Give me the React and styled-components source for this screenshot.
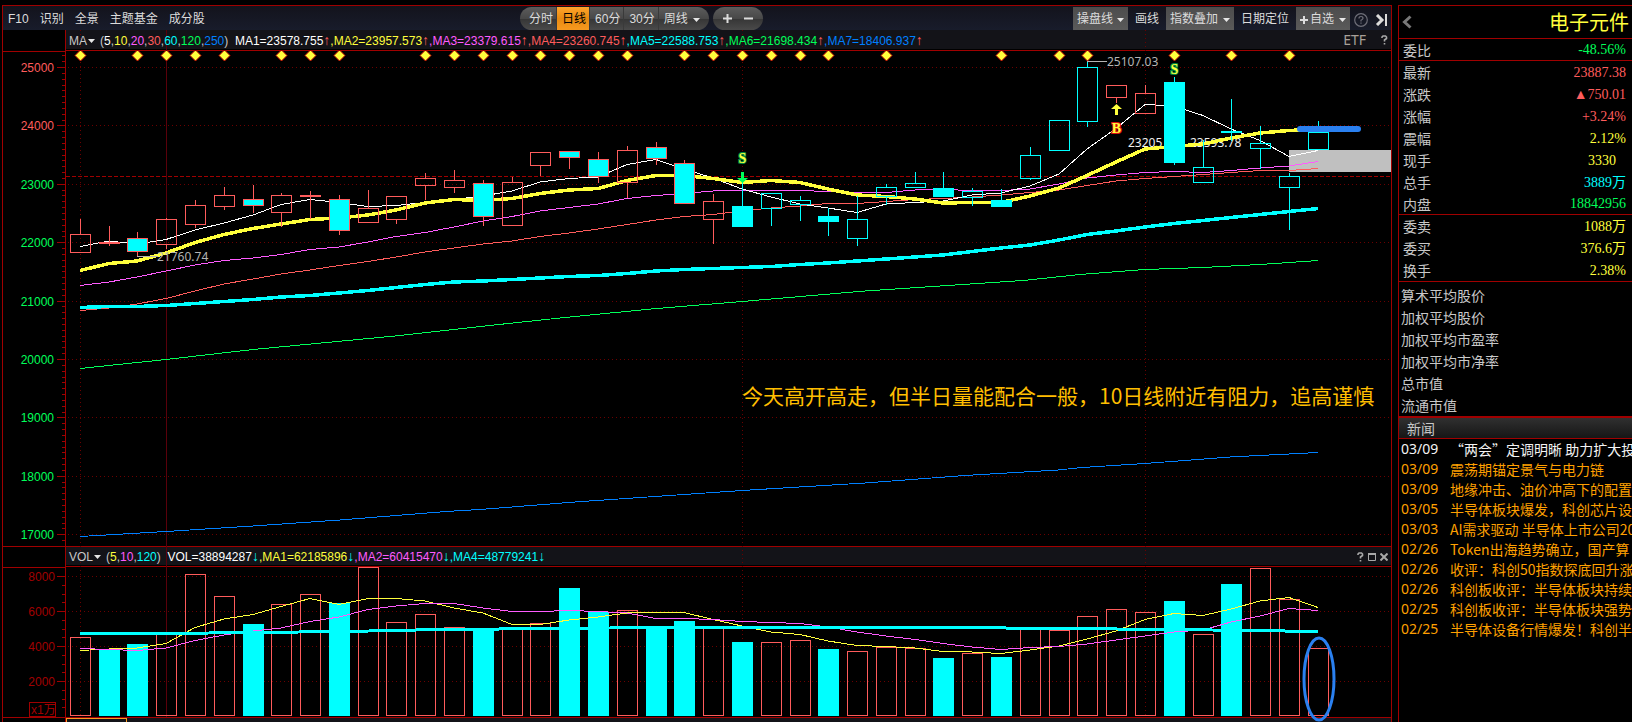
import React from 'react'
import styled, { createGlobalStyle } from 'styled-components'

const GlobalStyle = createGlobalStyle`
    * {
        box-sizing: border-box;
    }
    body {
        margin: 0;
        background: #000;
        color: #c8c8c8;
        font-family: "Liberation Sans", "Noto Sans CJK SC", sans-serif;
        font-size: 12px;
        overflow: hidden;
    }
    button {
        margin: 0;
        padding: 0;
        border: 0;
        background: none;
        color: inherit;
        font: inherit;
        cursor: pointer;
    }
    a {
        color: inherit;
        text-decoration: none;
    }
    svg {
        display: block;
    }
`

const RED = '#ff5c5c'
const LINE = '#a00000'
const CYAN = '#00ffff'
const YELLOW = '#ffff3c'
const GREEN = '#00ff5a'
const BLUE = '#0080ff'
const PINK = '#ff5cff'

const Page = styled.main`
    display: flex;
    gap: 6px;
    min-height: 100vh;
    padding: 5px 0 0 2px;
`

const ChartPane = styled.section`
    flex: 1;
    min-width: 0;
    display: flex;
    flex-direction: column;
    border: 1px solid ${LINE};
    border-bottom: 0;
`

const Toolbar = styled.header`
    display: flex;
    align-items: center;
    height: 24px;
    padding: 1px 2px 0 0;
    background: linear-gradient(#13131c, #181c2b);
    color: #dcdcdc;
    line-height: 21px;
    white-space: nowrap;
`

const Menu = styled.nav`
    display: flex;
    gap: 11px;
    flex: 0 1 517px;
    padding: 2px 0 0 5px;
`

const Pill = styled.div`
    display: flex;
    height: 23px;
    margin-right: 4px;
    border-radius: 12px;
    overflow: hidden;
    background: linear-gradient(#5c5c5c, #484848 50%, #363636 52%, #4a4a4a);
`

const Period = styled.button`
    display: flex;
    align-items: center;
    justify-content: center;
    gap: 5px;
    padding-top: 2px;
    padding-left: ${p => (p.$edge ? 9 : 5)}px;
    padding-right: ${p => (p.$last ? 8 : 3)}px;
    border-right: 1px solid ${p => (p.$last ? 'transparent' : '#3a3a3a')};
    background: ${p => (p.$active ? 'linear-gradient(#ffa52c, #e88a10 50%, #f79a20)' : 'none')};
    color: ${p => (p.$active ? '#000' : '#dcdcdc')};
`

const ZoomButton = styled.button`
    width: 21px;
    display: grid;
    place-items: center;

    &:first-child {
        margin-left: 4px;
    }
    &:last-child {
        margin-right: 4px;
    }
`

const Tools = styled.div`
    display: flex;
    align-items: center;
    gap: 7px;
    margin-left: auto;
`

const Tool = styled.button`
    display: flex;
    align-items: center;
    gap: ${p => (p.$wide ? 5 : 4)}px;
    height: 23px;
    padding: 2px ${p => (p.$boxed ? 4 : 0)}px 0;
    margin-left: ${p => (p.$tight ? -3 : 0)}px;
    background: ${p => (p.$boxed ? 'linear-gradient(#4c4c4c, #5a5a5a)' : 'none')};
`

const AddLabel = styled.span`
    display: flex;
    align-items: center;
    gap: 2px;
`

const Stack = styled.div`
    position: relative;
`

const Guides = styled.svg`
    position: absolute;
    inset: 0;
    z-index: ${p => (p.$top ? 2 : 0)};
    width: 100%;
    height: 100%;
    pointer-events: none;
`

const Legend = styled.div`
    display: grid;
    grid-template-columns: 63px 1fr;
    height: 21px;
    border-top: ${p => (p.$ruled ? `1px solid ${LINE}` : '0')};
`

const LegendGutter = styled.div`
    border-right: 1px solid ${LINE};
`

const LegendBar = styled.div`
    display: flex;
    align-items: center;
    padding: 0 7px 0 3px;
    background: #131318;
    border-bottom: 1px solid ${LINE};
    box-shadow: inset 0 -1px #000;
    line-height: 18px;
    white-space: nowrap;
`

const LegendText = styled.div`
    position: relative;
    z-index: 1;
    display: flex;
    align-items: center;
    padding-top: ${p => (p.$low ? 2 : 0)}px;
    white-space: pre;
`

const Tone = styled.span`
    color: ${p => p.$color};
`

const Arrow = styled(Tone)`
    font-size: 14px;
    line-height: 1;
`

const LegendName = styled.button`
    display: flex;
    align-items: center;
    gap: 1px;
    margin-right: 5px;
`

const LegendTools = styled.div`
    display: flex;
    align-items: center;
    gap: ${p => p.$gap}px;
    margin-left: auto;
    margin-right: -4px;
    color: #a8a8a8;
`

const EtfLink = styled.a`
    color: #a8a098;
    font-size: 14px;
    font-family: "Noto Sans", sans-serif;
`

const Plot = styled.svg`
    position: relative;
    z-index: 1;
    width: 100%;
    height: auto;
    font-family: "Liberation Sans", "Noto Sans CJK SC", sans-serif;
    font-size: 12px;
`

const BottomStrip = styled.footer`
    flex: 1;
    max-height: 24px;
    padding-left: 63px;
    border-top: 1px solid ${LINE};
    background: linear-gradient(90deg, #000 62px, ${LINE} 62px 63px, #131318 63px);
`

const BottomTab = styled.button`
    display: block;
    width: 61px;
    height: 24px;
    border: 1px solid #f79a20;
`

const SidePane = styled.aside`
    flex: 0 0 234px;
    min-width: 0;
    overflow: hidden;
    border: 1px solid ${LINE};
    border-width: 1px 0 0 1px;
    font-family: "Noto Sans CJK SC", sans-serif;
    font-size: 14px;
`

const SideHeader = styled.header`
    display: flex;
    align-items: center;
    justify-content: space-between;
    height: 33px;
    padding: 0 3px;
    border-bottom: 1px solid ${LINE};
`

const SideTitle = styled.h1`
    margin: 0;
    color: ${YELLOW};
    font-size: 20px;
    font-weight: 400;
    line-height: 30px;
`

const Quotes = styled.table`
    width: 100%;
    border-collapse: collapse;
    border-bottom: 1px solid ${LINE};

    th, td {
        height: 22px;
        padding: 1px 0 0;
        line-height: 21px;
        vertical-align: top;
    }
    th {
        padding-left: 4px;
        text-align: left;
        font-weight: 400;
    }
    &:not(:last-of-type) tr:last-child > * {
        height: 21px;
        line-height: 20px;
    }
`

const QuoteValue = styled.td`
    && {
        padding-right: ${p => (p.$inset ? 16 : 6)}px;
    }
    color: ${p => p.$color};
    font-family: "Liberation Serif", "Noto Sans CJK SC", serif;
    text-align: right;
`

const Averages = styled.ul`
    margin: 0;
    padding: 2px 0 0 2px;
    list-style: none;
    line-height: 22px;
    border-bottom: 2px solid ${LINE};
`

const NewsHeader = styled.h2`
    margin: 0;
    height: 21px;
    padding-left: 8px;
    border-bottom: 1px solid ${LINE};
    background: linear-gradient(#303030, #161616);
    font-size: 14px;
    font-weight: 400;
    line-height: 20px;
`

const NewsList = styled.ul`
    margin: 0;
    padding: 0 0 0 2px;
    list-style: none;
    line-height: 20px;
`

const NewsItem = styled.li`
    display: grid;
    grid-template-columns: 49px 1fr;
    color: ${p => (p.$fresh ? '#f4f4f4' : '#ffa000')};
    white-space: nowrap;

    time {
        font-family: "Noto Sans", sans-serif;
    }
`

const Caret = () => (
    <svg width="7" height="4" viewBox="0 0 7 4" aria-hidden="true">
        <path d="M0 0h7L3.5 4z" fill="#e6e6e6" />
    </svg>
)

const HelpMark = () => (
    <svg width="7" height="10" viewBox="0 0 7 10" aria-hidden="true">
        <path d="M1 3V2l1-1h2.500l1 1v1.500L3.500 5v1.500M3.500 8v1.500" fill="none" stroke="#a8a8a8" strokeWidth="1.600" />
    </svg>
)

// candle: [kind, high, top, bottom, low]
// r = hollow red, f = filled with red edge, h = hollow cyan, c = filled cyan
const CANDLES = [
    ['r', 219, 234, 253, 253], ['r', 226, 242, 244, 246], ['f', 232, 238, 252, 256], ['r', 218, 219, 245, 249],
    ['r', 200, 205, 225, 228], ['r', 187, 195, 207, 210], ['f', 185, 199, 206, 213], ['r', 193, 195, 213, 227],
    ['r', 191, 195, 197, 219], ['f', 195, 199, 231, 235], ['r', 190, 208, 223, 223], ['r', 196, 196, 220, 224],
    ['r', 173, 178, 186, 200], ['r', 170, 180, 188, 193], ['f', 180, 183, 217, 226], ['r', 177, 182, 226, 226],
    ['r', 152, 152, 166, 176], ['f', 151, 151, 158, 169], ['f', 152, 159, 177, 183], ['r', 146, 150, 183, 198],
    ['f', 142, 147, 159, 165], ['f', 160, 163, 204, 204], ['r', 194, 201, 220, 244], ['c', 182, 206, 227, 227],
    ['h', 193, 193, 209, 226], ['h', 196, 200, 205, 221], ['c', 208, 216, 222, 236], ['h', 196, 219, 239, 246],
    ['h', 184, 187, 197, 205], ['h', 172, 183, 188, 188], ['c', 172, 188, 197, 197], ['h', 188, 191, 198, 206],
    ['c', 189, 200, 207, 207], ['h', 147, 155, 179, 180], ['h', 120, 120, 151, 151], ['h', 60, 67, 122, 127],
    ['r', 85, 85, 98, 103], ['r', 85, 93, 114, 114], ['c', 77, 82, 163, 165], ['h', 140, 167, 183, 183],
    ['h', 99, 131, 133, 141], ['h', 126, 143, 149, 169], ['h', 173, 176, 188, 230], ['h', 121, 132, 150, 150],
]

// volume bar: [filled, top]
const VOLUMES = [
    [0, 637], [1, 649], [1, 644], [0, 634], [0, 574], [0, 596], [1, 624], [0, 604], [0, 594], [1, 603], [0, 567],
    [0, 622], [0, 614], [0, 627], [1, 628], [0, 627], [0, 623], [1, 588], [1, 612], [0, 610], [1, 627], [1, 621],
    [0, 628], [1, 642], [0, 642], [0, 640], [1, 649], [0, 651], [0, 647], [0, 648], [1, 658], [0, 653], [1, 657],
    [0, 629], [0, 630], [0, 616], [0, 609], [0, 612], [1, 601], [0, 634], [1, 584], [0, 568], [0, 599], [0, 648],
]

const EVENT_DAYS = [0, 2, 3, 4, 5, 7, 8, 9, 12, 13, 14, 15, 16, 17, 18, 19, 21, 22, 23, 24, 25, 26, 28, 32, 34, 35, 38, 40, 42]

const barX = i => Math.floor(80.3 + i * 28.79)
const byBar = values => values.map((y, i) => `${barX(i)},${y}`).join(' ')

const PRICE_LINES = [
    { color: BLUE, points: '80,536.5 166,531.5 253,526 340,520 446,511.5 480,509.5 575,502 742,490.5 865,483 965,475.5 1058,470 1082,467.5 1145,463.5 1230,457 1318,452.5' },
    { color: GREEN, points: '80,368.5 166,359.5 253,349.5 400,335.5 454,329.5 480,326.5 560,318 651,309 742,301.5 865,291 1023,280.500 1080,274.5 1145,269.5 1203,267.5 1260,264.5 1318,260.5' },
    { color: RED, points: byBar([310.5, 308, 304, 298.5, 291, 284, 279, 274, 270, 265.5, 261.5, 257, 252, 248, 244, 241, 236.5, 233, 229, 224.5, 220, 216.5, 214.5, 211, 208, 206, 203.5, 203.5, 201.5, 199.5, 198.5, 197, 195, 192.5, 190, 185.5, 181, 178.5, 176.5, 174.5, 172.5, 170.5, 170.5, 168.5]) },
    { color: PINK, points: byBar([285.5, 282, 277, 271, 265, 260.5, 258, 254.5, 249.5, 247, 242, 236.5, 232.5, 227, 221, 216.5, 211, 207.5, 204, 198.5, 195.5, 193.5, 191, 190.5, 190.5, 190.5, 191.5, 192.5, 192.5, 190, 189.5, 190.5, 190.5, 189, 184, 178, 175, 172.5, 171.5, 172.5, 170.5, 168, 166, 161.5]) },
    { color: '#ffffff', points: byBar([246.5, 241, 244, 239.5, 230, 223, 215, 204.5, 199.5, 202.5, 206.5, 205.5, 202.5, 199.5, 196, 191, 182, 178.5, 177, 164.5, 159.5, 169, 178, 189, 197, 204, 208, 212.5, 204, 202.5, 201, 195, 193, 186, 174, 149, 128.5, 104.5, 106, 115.5, 129, 140.5, 156.5, 150.5]) },
    { color: YELLOW, width: 3.5, points: byBar([270.5, 263.5, 261, 253, 242.5, 234.5, 228.5, 224, 219.5, 218, 215, 210, 203, 199.5, 200.5, 198.5, 193.5, 190, 188.5, 180.5, 175.5, 175.5, 178.5, 182.5, 180.5, 182.5, 189, 195, 196.5, 199, 203, 202.5, 202.5, 196, 188, 175.5, 162, 149, 146.5, 144, 138, 133, 130.5, 129]) },
    { color: CYAN, width: 3.5, points: byBar([307.5, 306.5, 306.5, 305.5, 303.5, 301.5, 299.5, 297, 295.5, 293, 290.5, 287.5, 284.5, 282, 281, 279.5, 278, 276.5, 275.5, 273.5, 271, 269.5, 268.5, 267.5, 266.5, 264.5, 263, 261, 259, 257, 255, 251.5, 248, 245, 240, 234.5, 231, 227, 223.5, 220.5, 217.5, 214.5, 211.5, 208.5]) },
]

const VOLUME_LINES = [
    { color: YELLOW, points: byBar([650.5, 649, 648, 643.5, 627.5, 619, 614.5, 606.5, 598.5, 604.5, 598.5, 598.5, 601, 608, 613, 624.5, 624.5, 620, 617, 613, 612.5, 612.5, 619.5, 626, 632, 634.5, 641, 645.5, 646.5, 648, 651.5, 652, 653.5, 650, 646, 639, 631, 619.5, 613.5, 615.5, 609, 601, 597.5, 607.5]) },
    { color: PINK, points: byBar([648.5, 649.5, 650.5, 648, 640.5, 635, 631, 628, 621.5, 617, 609.5, 606, 603.5, 603.5, 608, 611.5, 611.5, 610.5, 611.5, 613, 618.5, 618.5, 619.5, 621.5, 622.5, 623.5, 627, 632, 636, 639.5, 643.5, 647, 649.5, 647.5, 646.5, 644, 640, 636, 632, 630, 622, 616, 608.5, 610.5]) },
    { color: CYAN, width: 3, points: '80,633.5 165,633.5 253,632.5 345,631.5 440,629.5 560,628.5 660,627.5 950,627.5 1059,628.500 1174,629.5 1250,630.5 1318,631.5' },
]

const PRICE_TICKS = [25000, 24000, 23000, 22000, 21000, 20000, 19000, 18000, 17000]
const priceY = v => Math.round(67 + (25000 - v) * 0.0584) + 0.5
const volumeY = v => Math.round(576 + (8000 - v) * 0.0175) + 0.5

const range = (from, to, step) => {
    const out = []
    for (let v = from; v <= to; v += step) out.push(v)
    return out
}

const Curves = ({ lines }) => lines.map((l, i) => (
    <polyline key={i} points={l.points} fill="none" stroke={l.color} strokeWidth={l.width || 1} shapeRendering="crispEdges" />
))

const Candle = ({ index, data }) => {
    const [kind, high, top, bottom, low] = data
    const x = barX(index)
    const stroke = kind === 'r' || kind === 'f' ? RED : CYAN
    const fill = kind === 'f' || kind === 'c' ? CYAN : 'none'
    return (
        <g stroke={stroke} shapeRendering="crispEdges">
            <path d={`M${x + 0.5} ${high}V${top}M${x + 0.5} ${bottom}V${low}`} />
            <rect x={x - 9.5} y={top + 0.5} width="20" height={bottom - top - 1} fill={fill} />
        </g>
    )
}

const Signal = ({ x, y, children, outline }) => (
    <text x={x} y={y} textAnchor="middle" fontFamily="Liberation Serif, serif" fontWeight="700" fontSize="14"
        fill={YELLOW} stroke={outline} strokeWidth="2" paintOrder="stroke">{children}</text>
)

const PriceChart = () => (
    <Plot viewBox="3 51 1388 495" role="img" aria-label="日线 K线图">
        <g stroke={LINE} shapeRendering="crispEdges">
            <path d="M3 51.500H65M65.500 51V546" />
            {range(16900, 25200, 100).map(v => (
                <path key={v} d={`M${v % 1000 ? 62 : 57} ${priceY(v)}H65`} />
            ))}
        </g>
        {PRICE_TICKS.map(v => (
            <g key={v}>
                <path d={`M68 ${priceY(v)}H1391`} stroke="#6a0000" strokeDasharray="1 3" shapeRendering="crispEdges" />
                <text x="54" y={priceY(v) + 4.5} textAnchor="end" fill={v > 23000 ? RED : GREEN}>{v}</text>
            </g>
        ))}
        <path d="M66 176.500H1391" stroke={LINE} strokeDasharray="4 2" shapeRendering="crispEdges" />
        <rect x="1289" y="150" width="102" height="22" fill="#c0c0c0" />
        <g fontFamily="Noto Sans" fill="#f0f0f0">
            <text x="1128" y="147">23205</text>
            <text x="1190" y="147">23593.78</text>
        </g>
        <Curves lines={PRICE_LINES} />
        {CANDLES.map((c, i) => <Candle key={i} index={i} data={c} />)}
        {EVENT_DAYS.map(i => (
            <path key={i} d={`M${barX(i) + 0.5} 50l5.500 5.500l-5.500 5.500l-5.500-5.500z`} fill={YELLOW} stroke="#c00000" strokeWidth="1" />
        ))}
        <path d="M137 256.500H158M1087 61.500H1107" stroke="#b4b4b4" shapeRendering="crispEdges" />
        <g fontFamily="Noto Sans" fill="#b4b4b4">
            <text x="157" y="261">21760.74</text>
            <text x="1107" y="66">25107.03</text>
        </g>
        <Signal x="742.5" y="163" outline="#008a40">S</Signal>
        <Signal x="1174.5" y="74" outline="#008a40">S</Signal>
        <Signal x="1116.5" y="133" outline="#e01010">B</Signal>
        <path d="M741 172h3v6h4l-5.500 5l-5.500-5h4z" fill={GREEN} />
        <path d="M1115 115h3v-6h4l-5.500-5l-5.500 5h4z" fill={YELLOW} />
        <path d="M1300 129H1358" stroke="#2a80f0" strokeWidth="6" strokeLinecap="round" />
        <text x="742" y="404" fontSize="21" fill="#ffbe00" fontFamily="Noto Sans CJK SC">
            今天高开高走，但半日量能配合一般，10日线附近有阻力，追高谨慎
        </text>
    </Plot>
)

const VolumeChart = () => (
    <Plot viewBox="3 567 1388 150" role="img" aria-label="成交量">
        <g stroke={LINE} shapeRendering="crispEdges">
            <path d="M3 567.500H65M65.500 567V717" />
            {range(500, 8000, 500).map(v => (
                <path key={v} d={`M${v % 2000 ? 62 : 57} ${volumeY(v)}H65`} />
            ))}
            <rect x="29.500" y="702.500" width="26" height="14" fill="none" />
        </g>
        <text x="31" y="714" fill={LINE}>x1万</text>
        {[8000, 6000, 4000, 2000].map(v => (
            <g key={v}>
                <path d={`M68 ${volumeY(v)}H1391`} stroke="#6a0000" strokeDasharray="1 3" shapeRendering="crispEdges" />
                <text x="55" y={volumeY(v) + 4.5} textAnchor="end" fill={LINE}>{v}</text>
            </g>
        ))}
        {VOLUMES.map(([filled, top], i) => (
            <rect key={i} x={barX(i) - 9.5} y={top + 0.5} width="20" height={715 - top}
                fill={filled ? CYAN : 'none'} stroke={filled ? CYAN : RED} shapeRendering="crispEdges" />
        ))}
        <Curves lines={VOLUME_LINES} />
    </Plot>
)

const MA_PERIODS = [['5', '#ffffff'], ['10', YELLOW], ['20', PINK], ['30', RED], ['60', CYAN], ['120', GREEN], ['250', BLUE]]
const MA_VALUES = ['23578.755', '23957.573', '23379.615', '23260.745', '22588.753', '21698.434', '18406.937']

const VOL_PERIODS = [['5', YELLOW], ['10', PINK], ['120', CYAN]]
const VOL_VALUES = [
    ['VOL=38894287', '#ffffff'],
    ['MA1=62185896', YELLOW],
    ['MA2=60415470', PINK],
    ['MA4=48779241', CYAN],
]

const LegendLine = ({ name, periods, values, arrow, arrowColor, low }) => (
    <LegendText $low={low}>
        <LegendName>{name}<Caret /></LegendName>
        <span>
            (
            {periods.map(([n, color], i) => (
                <React.Fragment key={n}>{i > 0 && ','}<Tone $color={color}>{n}</Tone></React.Fragment>
            ))}
            {')  '}
            {values.map(([text, color], i) => (
                <Tone key={text} $color={color}>
                    {i > 0 && ','}{text}<Arrow $color={arrowColor}>{arrow}</Arrow>
                </Tone>
            ))}
        </span>
    </LegendText>
)

const QUOTES = [
    [['委比', '-48.56%', GREEN]],
    [
        ['最新', '23887.38', RED],
        ['涨跌', '▲750.01', RED],
        ['涨幅', '+3.24%', RED],
        ['震幅', '2.12%', YELLOW],
        ['现手', '3330', YELLOW, true],
        ['总手', '3889万', CYAN],
        ['内盘', '18842956', GREEN],
    ],
    [
        ['委卖', '1088万', YELLOW],
        ['委买', '376.6万', YELLOW],
        ['换手', '2.38%', YELLOW],
    ],
]

const AVERAGES = ['算术平均股价', '加权平均股价', '加权平均市盈率', '加权平均市净率', '总市值', '流通市值']

const NEWS = [
    ['03/09', '“两会”定调明晰 助力扩大投'],
    ['03/09', '震荡期锚定景气与电力链'],
    ['03/09', '地缘冲击、油价冲高下的配置'],
    ['03/05', '半导体板块爆发，科创芯片设'],
    ['03/03', 'AI需求驱动 半导体上市公司20'],
    ['02/26', 'Token出海趋势确立，国产算'],
    ['02/26', '收评：科创50指数探底回升涨'],
    ['02/26', '科创板收评：半导体板块持续'],
    ['02/25', '科创板收评：半导体板块强势'],
    ['02/25', '半导体设备行情爆发！科创半'],
]

const App = () => (
    <Page>
        <GlobalStyle />
        <ChartPane>
            <Toolbar>
                <Menu>
                    {['F10', '识别', '全景', '主题基金', '成分股'].map(t => <a key={t} href="#menu">{t}</a>)}
                </Menu>
                <Pill>
                    <Period $edge>分时</Period>
                    <Period $active>日线</Period>
                    <Period>60分</Period>
                    <Period>30分</Period>
                    <Period $last>周线<Caret /></Period>
                </Pill>
                <Pill>
                    <ZoomButton aria-label="放大">
                        <svg width="9" height="9" viewBox="0 0 9 9"><path d="M4.500 0v9M0 4.500h9" stroke="#dcdcdc" strokeWidth="2" /></svg>
                    </ZoomButton>
                    <ZoomButton aria-label="缩小">
                        <svg width="9" height="9" viewBox="0 0 9 9"><path d="M0 4.500h9" stroke="#dcdcdc" strokeWidth="2" /></svg>
                    </ZoomButton>
                </Pill>
                <Tools>
                    <Tool $boxed>操盘线<Caret /></Tool>
                    <Tool>画线</Tool>
                    <Tool $boxed $wide>指数叠加<Caret /></Tool>
                    <Tool>日期定位</Tool>
                    <Tool $boxed $wide>
                        <AddLabel>
                            <svg width="8" height="8" viewBox="0 0 8 8"><path d="M4 0v8M0 4h8" stroke="#dcdcdc" strokeWidth="2" /></svg>
                            自选
                        </AddLabel>
                        <Caret />
                    </Tool>
                    <Tool $tight aria-label="帮助">
                        <svg width="14" height="14" viewBox="0 0 14 14" fill="none" stroke="#6e6e78" strokeWidth="1.200">
                            <circle cx="7" cy="7" r="6.300" />
                            <path d="M5 5.500q0-2 2-2t2 1.800q0 1-2 2v1.200M7 9.500v1.200" />
                        </svg>
                    </Tool>
                    <Tool aria-label="收起">
                        <svg width="14" height="12" viewBox="0 0 14 12" fill="none" stroke="#dcdcdc">
                            <path d="M2 1l5 5l-5 5" strokeWidth="3" />
                            <path d="M11 0v12" strokeWidth="2" />
                        </svg>
                    </Tool>
                </Tools>
            </Toolbar>

            <Stack>
                <Guides viewBox="3 30 1388 687" aria-hidden="true">
                    <path d="M166.500 30V717" stroke="#5a000a" shapeRendering="crispEdges" />
                    <path d="M80.500 30V717M742.500 30V717M1145.500 30V717" stroke="#6a0000" strokeDasharray="1 3" shapeRendering="crispEdges" />
                </Guides>
                <Legend>
                    <LegendGutter />
                    <LegendBar>
                        <LegendLine
                            name="MA"
                            periods={MA_PERIODS}
                            values={MA_VALUES.map((v, i) => [`MA${i + 1}=${v}`, MA_PERIODS[i][1]])}
                            arrow="↑"
                            arrowColor={RED}
                            low
                        />
                        <LegendTools $gap={15}>
                            <EtfLink href="#etf">ETF</EtfLink>
                            <button aria-label="指标说明"><HelpMark /></button>
                        </LegendTools>
                    </LegendBar>
                </Legend>
                <PriceChart />
                <Legend $ruled>
                    <LegendGutter />
                    <LegendBar>
                        <LegendLine name="VOL" periods={VOL_PERIODS} values={VOL_VALUES} arrow="↓" arrowColor={CYAN} />
                        <LegendTools $gap={4}>
                            <button aria-label="指标说明"><HelpMark /></button>
                            <button aria-label="最大化">
                                <svg width="8" height="8" viewBox="0 0 8 8">
                                    <path d="M.5 1H7.500V7.500H.5z" fill="none" stroke="#a8a8a8" />
                                    <path d="M0 1h8" stroke="#a8a8a8" strokeWidth="2" />
                                </svg>
                            </button>
                            <button aria-label="关闭">
                                <svg width="8" height="8" viewBox="0 0 8 8">
                                    <path d="M.5 .5l7 7M7.500 .5l-7 7" stroke="#a8a8a8" strokeWidth="2" />
                                </svg>
                            </button>
                        </LegendTools>
                    </LegendBar>
                </Legend>
                <VolumeChart />
                <Guides $top viewBox="3 30 1388 687" overflow="visible" aria-hidden="true">
                    <ellipse cx="1319" cy="679" rx="15" ry="41" fill="none" stroke="#2a80f0" strokeWidth="3" />
                </Guides>
            </Stack>
            <BottomStrip>
                <BottomTab aria-label="指标" />
            </BottomStrip>
        </ChartPane>

        <SidePane>
            <SideHeader>
                <button aria-label="返回">
                    <svg width="10" height="14" viewBox="0 0 10 14" fill="none" stroke="#787878" strokeWidth="3">
                        <path d="M8.500 1.500L2.500 7l6 5.500" />
                    </svg>
                </button>
                <SideTitle>电子元件</SideTitle>
            </SideHeader>
            {QUOTES.map((rows, i) => (
                <Quotes key={i}>
                    <tbody>
                        {rows.map(([label, value, color, inset]) => (
                            <tr key={label}>
                                <th scope="row">{label}</th>
                                <QuoteValue $color={color} $inset={inset}>{value}</QuoteValue>
                            </tr>
                        ))}
                    </tbody>
                </Quotes>
            ))}
            <Averages>
                {AVERAGES.map(t => <li key={t}>{t}</li>)}
            </Averages>
            <NewsHeader>新闻</NewsHeader>
            <NewsList>
                {NEWS.map(([date, title], i) => (
                    <NewsItem key={title} $fresh={i === 0}>
                        <time>{date}</time>
                        <a href="#news">{title}</a>
                    </NewsItem>
                ))}
            </NewsList>
        </SidePane>
    </Page>
)

export default App
